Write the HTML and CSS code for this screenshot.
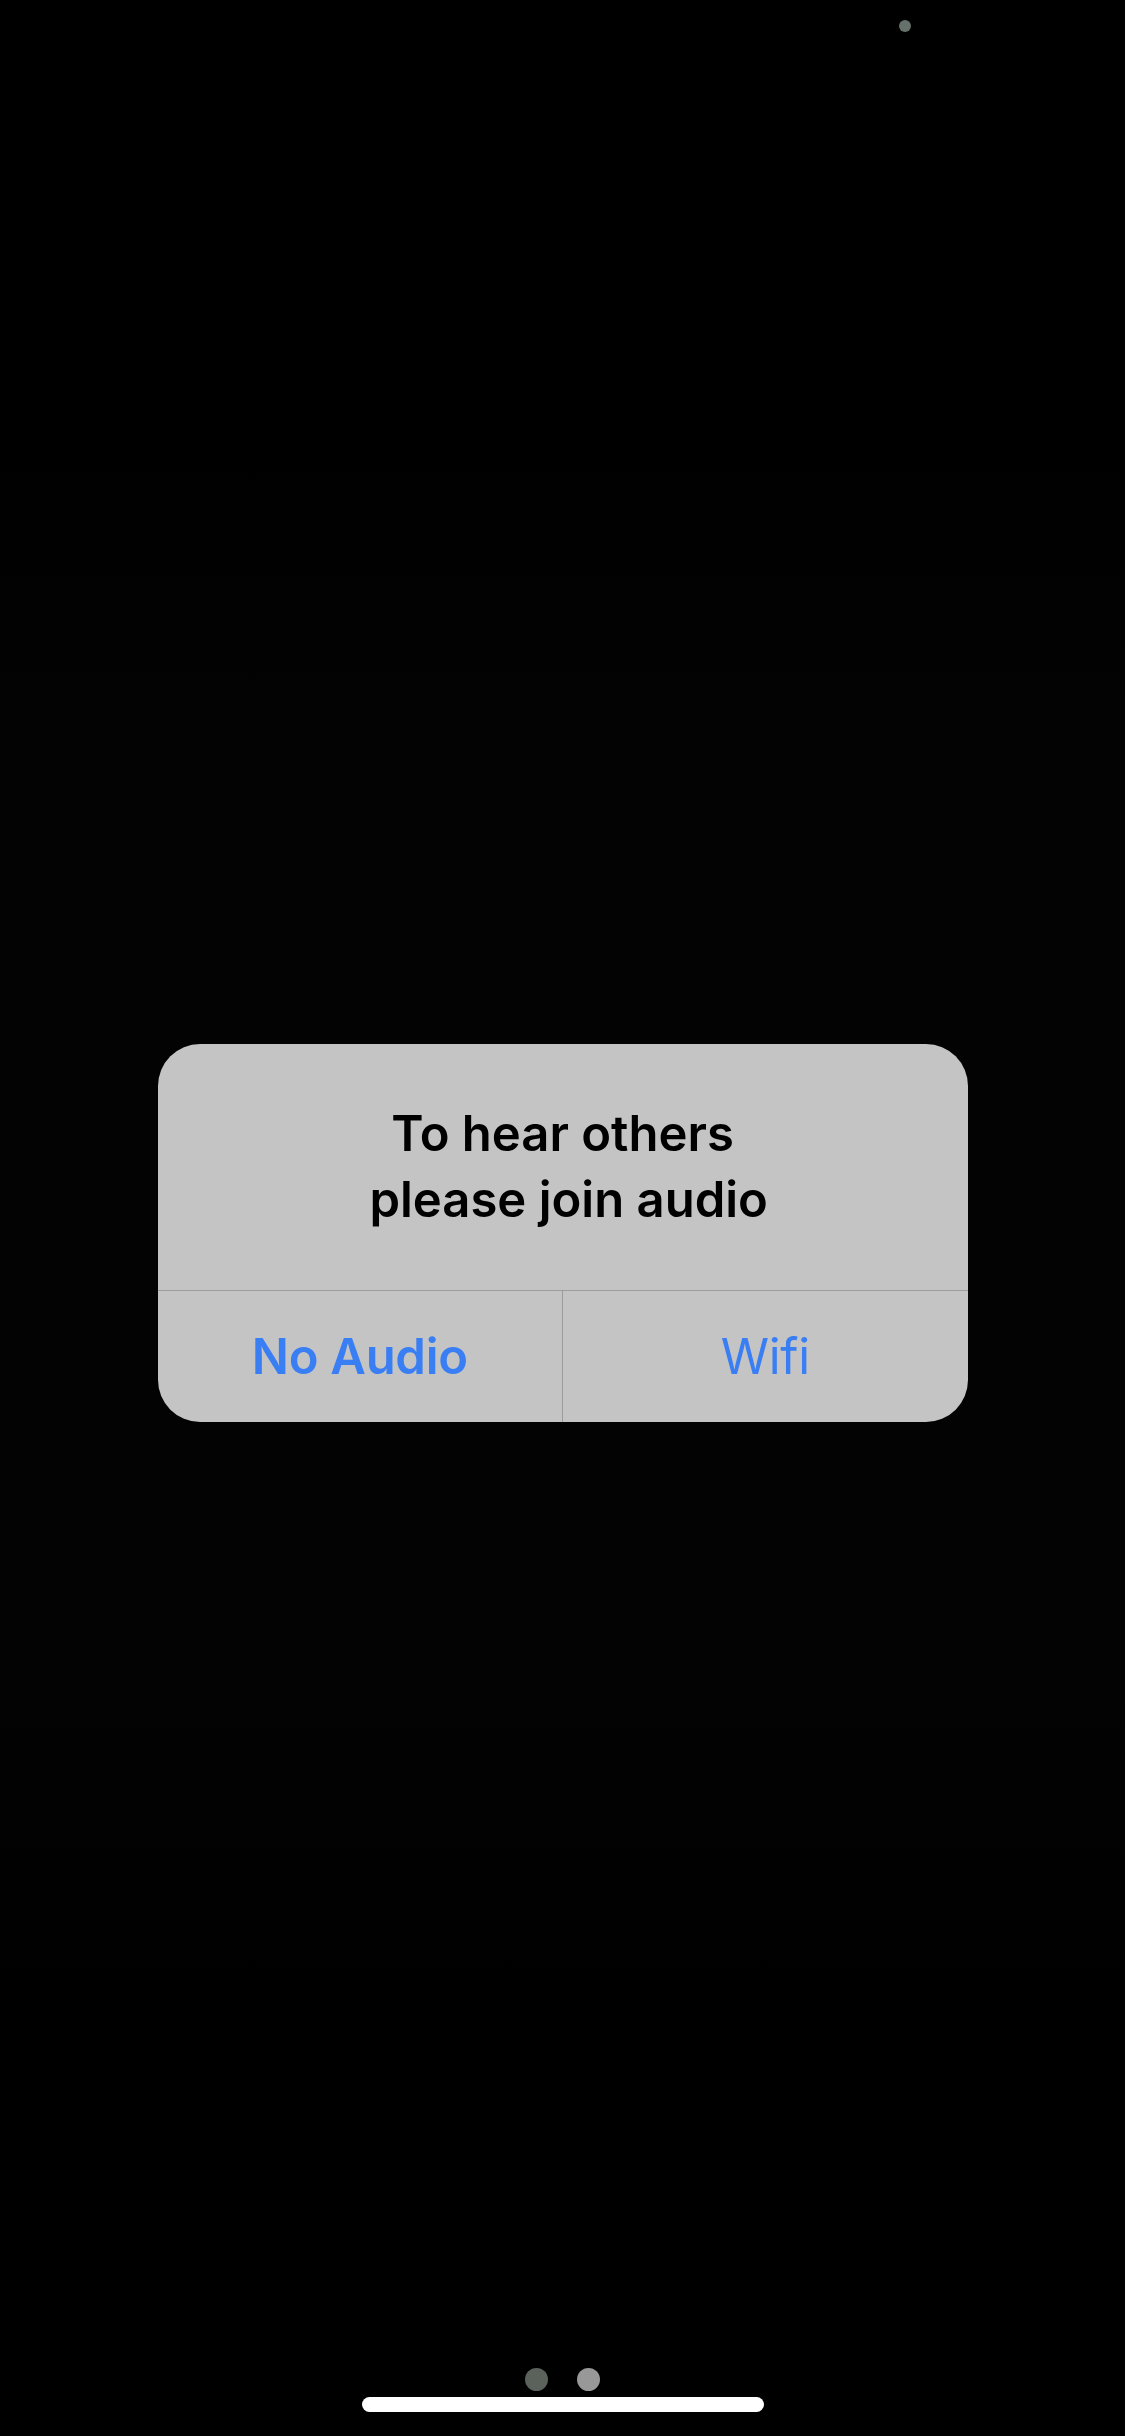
FILE: index.html
```html
<!DOCTYPE html>
<html lang="en">
<head>
<meta charset="utf-8">
<title>Join audio</title>
<link rel="stylesheet" href="styles.css">
</head>
<body>
<div class="screen">
  <div class="status">
    <span class="status-dot"></span>
  </div>
  <div class="dialog">
    <div class="dialog-title">To hear others<br>&nbsp;please join audio</div>
    <div class="dialog-actions">
      <div class="action action-bold">No Audio</div>
      <div class="action">Wifi</div>
    </div>
  </div>
  <div class="spacer"></div>
  <div class="bottom">
    <div class="pager">
      <span class="pager-dot pager-dot-dim"></span>
      <span class="pager-dot pager-dot-light"></span>
    </div>
    <div class="home-indicator"></div>
  </div>
</div>
</body>
</html>
```
FILE: styles.css
```css
html, body {
  margin: 0;
  padding: 0;
  background: #000;
}

.screen {
  width: 1125px;
  height: 2436px;
  display: flex;
  flex-direction: column;
  background: linear-gradient(#000 0, #000 460px, #040303 700px, #040303 1700px, #000 1980px, #000 100%);
  font-family: Inter, "Noto Sans", "Liberation Sans", sans-serif;
  overflow: hidden;
}

.status {
  display: flex;
  justify-content: flex-end;
  padding: 20px 214px 0 0;
  height: 12px;
}

.status-dot {
  width: 12px;
  height: 12px;
  border-radius: 50%;
  background: #67716c;
}

.dialog {
  margin: 1012px auto 0;
  width: 810px;
  background: #c4c4c4;
  border-radius: 42px;
  overflow: hidden;
}

.dialog-title {
  height: 246px;
  box-sizing: border-box;
  padding-top: 57px;
  text-align: center;
  font-size: 49px;
  line-height: 66px;
  font-weight: 600;
  color: #000;
}

.dialog-actions {
  display: flex;
  border-top: 1px solid #9c9c9c;
  height: 131px;
}

.action {
  flex: 1;
  text-align: center;
  line-height: 131px;
  font-size: 49px;
  color: #3a7ef4;
  font-weight: 400;
  letter-spacing: -0.3px;
}

.action + .action {
  border-left: 1px solid #9c9c9c;
}

.action-bold {
  font-weight: 600;
}

.spacer {
  flex: 1;
}

.bottom {
  display: flex;
  flex-direction: column;
  align-items: center;
  padding-bottom: 24px;
}

.pager {
  display: flex;
  gap: 29px;
  margin-bottom: 6px;
}

.pager-dot {
  width: 23px;
  height: 23px;
  border-radius: 50%;
}

.pager-dot-dim {
  background: #5b615b;
}

.pager-dot-light {
  background: #989898;
}

.home-indicator {
  width: 402px;
  height: 15px;
  border-radius: 8px;
  background: #fff;
}
```
